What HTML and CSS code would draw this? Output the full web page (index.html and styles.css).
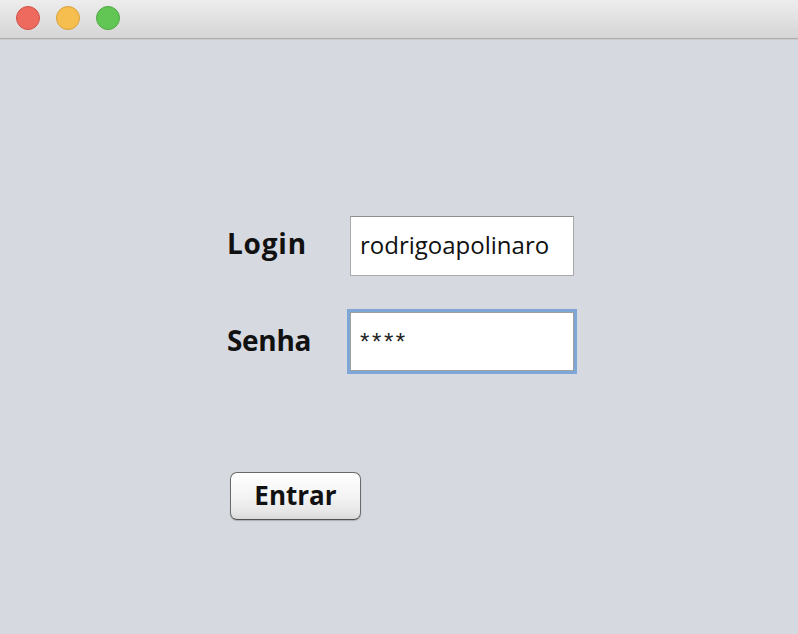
FILE: index.html
```html
<!DOCTYPE html>
<html lang="pt">
<head>
<meta charset="utf-8">
<title>Login</title>
<link rel="stylesheet" href="styles.css">
</head>
<body>
<div class="window">
  <div class="titlebar">
    <span class="light red"></span>
    <span class="light yellow"></span>
    <span class="light green"></span>
  </div>
  <div class="content">
    <div class="form">
      <label class="label label-login">Login</label>
      <div class="field"><span class="value">rodrigoapolinaro</span></div>
      <label class="label label-senha">Senha</label>
      <div class="field focused"><span class="stars">****</span></div>
    </div>
    <button class="button">Entrar</button>
  </div>
</div>
</body>
</html>
```
FILE: styles.css
```css
html, body {
  margin: 0;
  padding: 0;
}
body {
  width: 798px;
  height: 634px;
  overflow: hidden;
  background: #d6d9e0;
  font-family: "Open Sans", "DejaVu Sans", sans-serif;
  color: #111;
}
.window {
  width: 798px;
  height: 634px;
  display: flex;
  flex-direction: column;
}
.titlebar {
  height: 32px;
  flex: none;
  border-bottom: 1px solid #aeaeae;
  background: linear-gradient(to bottom, #ededed, #d5d5d5);
  display: flex;
  align-items: flex-start;
  gap: 16px;
  padding: 6px 0 0 16px;
  box-sizing: content-box;
}
.light {
  width: 24px;
  height: 24px;
  border-radius: 50%;
  box-sizing: border-box;
}
.red { background: #ee6a5f; border: 1px solid #d0524a; }
.yellow { background: #f6be4f; border: 1px solid #d8a13c; }
.green { background: #62c655; border: 1px solid #4ea844; }
.content {
  flex: 1;
  border-top: 1px solid #c9cace;
  padding: 176px 0 0 227px;
  display: flex;
  flex-direction: column;
  align-items: flex-start;
}
.form {
  display: grid;
  grid-template-columns: 123px 224px;
  row-gap: 36px;
  align-items: center;
}
.label {
  font-weight: 700;
  font-size: 28px;
  line-height: 1;
  padding-bottom: 4px;
}
.label-login {
  letter-spacing: 0.8px;
  padding-bottom: 6px;
}
.label-senha {
  letter-spacing: -0.3px;
}
.field {
  box-sizing: border-box;
  height: 60px;
  background: #fff;
  border: 1px solid #ababab;
  border-top-color: #8e8e8e;
  display: flex;
  align-items: center;
  padding-left: 9px;
}
.field.focused {
  height: 59px;
  box-shadow: 0 0 0 3px #7ea7d8;
  border-color: #a0a0a0;
  align-items: flex-start;
  padding-top: 17px;
}
.value {
  font-size: 24px;
  line-height: 1;
  padding-bottom: 3px;
}
.stars {
  font-family: "Liberation Sans", sans-serif;
  font-size: 24px;
  line-height: 1;
  letter-spacing: 2.6px;
  color: #222;
}
.button {
  margin-top: 101px;
  margin-left: 3px;
  width: 131px;
  height: 48px;
  border: 1px solid #6a6a6a;
  border-bottom-color: #505050;
  border-radius: 7px;
  background: linear-gradient(to bottom, #ffffff 0%, #f4f4f4 50%, #e6e6e6 85%, #d9d9d9 100%);
  box-shadow: 0 1px 1px rgba(0,0,0,0.2);
  font-family: "Open Sans", "DejaVu Sans", sans-serif;
  font-weight: 700;
  font-size: 26px;
  color: #111;
  padding: 0 0 2px 0;
  line-height: 1;
}
```
